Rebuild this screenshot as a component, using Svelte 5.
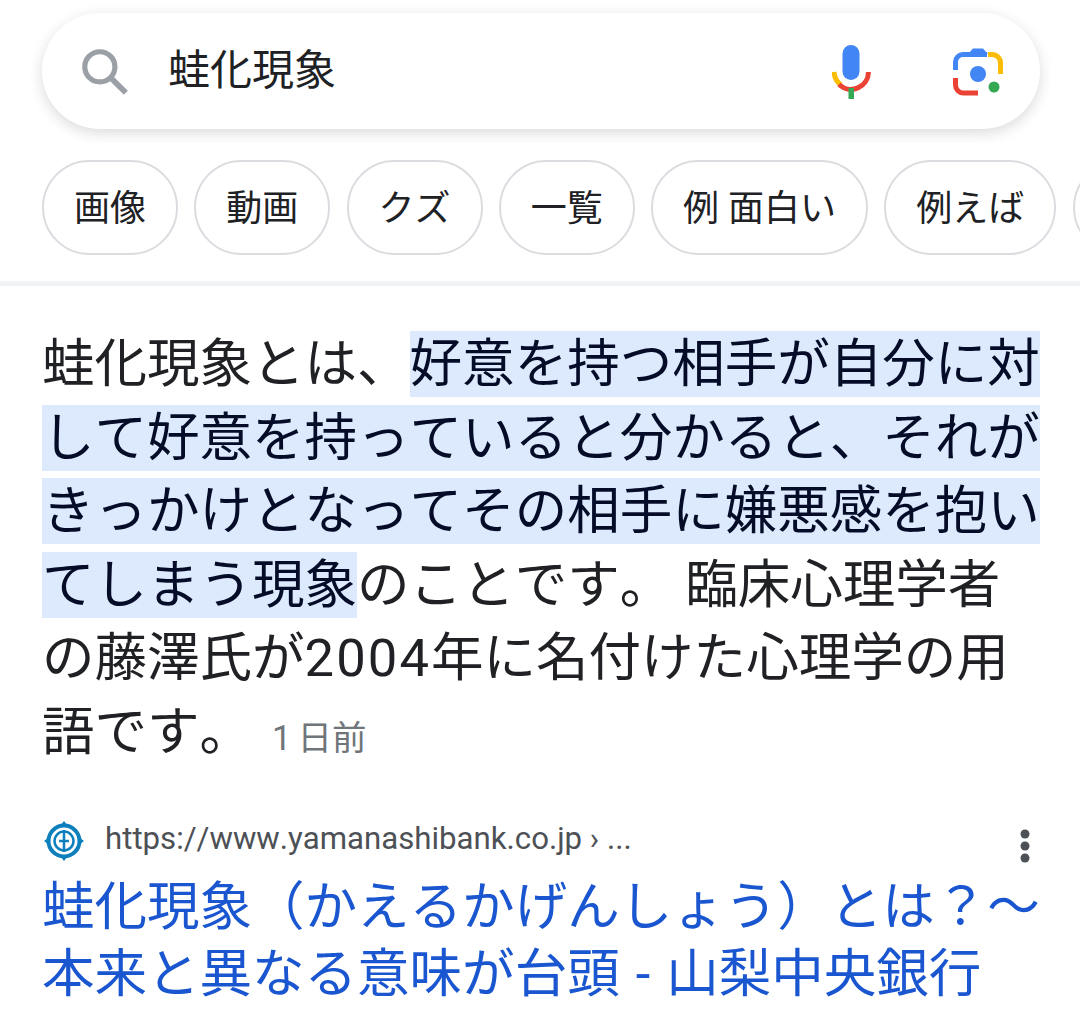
<script>
  const chips = ['画像', '動画', 'クズ', '一覧', '例 面白い', '例えば', '意味'];
</script>

<div class="page">
  <div class="header">
    <div class="search">
      <svg class="glass" width="52" height="52" viewBox="0 0 50 50">
        <circle cx="21" cy="21" r="14.500" fill="none" stroke="#9aa0a6" stroke-width="5" />
        <path d="M31.500 31.500 L46 46" fill="none" stroke="#9aa0a6" stroke-width="5.500" />
      </svg>
      <span class="query">蛙化現象</span>
      <svg class="mic" width="40" height="54" viewBox="0 0 40 54">
        <rect x="10.500" y="0" width="17" height="35" rx="8.500" fill="#4285f4" />
        <path d="M2 27 A 17.500 17.500 0 0 0 9 40" fill="none" stroke="#fbbc04" stroke-width="5" />
        <path d="M36.500 27 A 17.500 17.500 0 0 1 7 39.500" fill="none" stroke="#ea4335" stroke-width="5" />
        <rect x="16.500" y="43" width="5.500" height="11" fill="#34a853" />
      </svg>
      <svg class="lens" width="50" height="50" viewBox="0 0 50 50">
        <path d="M15 7 L20 1.500 H30 L35 7 Z" fill="#4285f4" />
        <path d="M2.500 23 V15 A 7.500 7.500 0 0 1 10 7.500 H34" fill="none" stroke="#4285f4" stroke-width="5" />
        <path d="M35 7.500 H39 A 8.500 8.500 0 0 1 47.500 16 V27" fill="none" stroke="#fbbc04" stroke-width="5" />
        <path d="M2.500 31 V38 A 8 8 0 0 0 10.500 46 H25" fill="none" stroke="#ea4335" stroke-width="5" />
        <circle cx="25" cy="27" r="8" fill="#4285f4" />
        <circle cx="41" cy="40" r="5.500" fill="#34a853" />
      </svg>
    </div>
    <div class="chips">
      {#each chips as chip}
        <span class="chip">{chip}</span>
      {/each}
    </div>
  </div>

  <div class="snippet">
    <p class="answer">蛙化現象とは、<mark>好意を持つ相手が自分に対して好意を持っていると分かると、それがきっかけとなってその相手に嫌悪感を抱いてしまう現象</mark>のことです。 臨床心理学者の藤澤氏が<span class="num">2004</span>年に名付けた心理学の用語です。<span class="date">1 日前</span></p>
  </div>

  <div class="result">
    <div class="source">
      <svg class="favicon" width="40" height="40" viewBox="0 0 40 40">
        <path d="M20 0 L23 4 H17 Z M20 40 L23 36 H17 Z M0 20 L4 23 V17 Z M40 20 L36 23 V17 Z" fill="#0d7fbd" />
        <circle cx="20" cy="20" r="15.500" fill="none" stroke="#0d7fbd" stroke-width="4" />
        <circle cx="20" cy="20" r="9.500" fill="none" stroke="#0d7fbd" stroke-width="2.500" />
        <path d="M20 9 V31 M15 20 H25" stroke="#0d7fbd" stroke-width="2.500" />
      </svg>
      <span class="url">https://www.yamanashibank.co.jp › ...</span>
      <svg class="more" width="10" height="34" viewBox="0 0 10 34">
        <circle cx="5" cy="5" r="4.500" fill="#4d5156" />
        <circle cx="5" cy="17" r="4.500" fill="#4d5156" />
        <circle cx="5" cy="29" r="4.500" fill="#4d5156" />
      </svg>
    </div>
    <h3 class="title">蛙化現象（かえるかげんしょう）とは？～本来と異なる意味が台頭 - 山梨中央銀行</h3>
  </div>
</div>

<style>
  :global(body) {
    background: #fff;
    overflow: hidden;
  }
  .page {
    width: 1080px;
    height: 1021px;
    overflow: hidden;
    font-family: Roboto, "Noto Sans CJK JP", sans-serif;
    font-kerning: none;
    color: #202124;
  }
  .header {
    padding-top: 13px;
    height: 268px;
    border-bottom: 5px solid #f1f3f4;
  }
  .search {
    display: flex;
    align-items: center;
    width: 998px;
    height: 116px;
    margin-left: 42px;
    border-radius: 58px;
    background: #fff;
    box-shadow: 0 4px 14px rgba(32, 33, 36, 0.16);
  }
  .glass {
    margin-left: 36px;
    margin-bottom: 1px;
  }
  .query {
    margin-left: 38px;
    font-size: 42px;
    line-height: 58px;
    flex: 1;
  }
  .mic {
    margin-top: 2px;
    margin-right: 81px;
  }
  .lens {
    margin-right: 37px;
    margin-top: 1px;
  }
  .chips {
    display: flex;
    gap: 16.250px;
    margin-top: 31px;
    padding-left: 42px;
    overflow: hidden;
  }
  .chip {
    flex: none;
    display: flex;
    align-items: center;
    height: 85px;
    padding: 0 30px 6px;
    border: 2.500px solid #dadce0;
    border-radius: 48px;
    font-size: 36px;
    white-space: pre;
  }
  .snippet {
    padding: 42px 40px 0 42px;
  }
  .answer {
    margin: 0;
    font-size: 52.530px;
    line-height: 73.600px;
  }
  mark {
    padding: 2px 0;
    background: #dde9fd;
    color: #040c28;
  }
  .num {
    letter-spacing: 2.100px;
  }
  .date {
    margin-left: 20px;
    font-size: 34.500px;
    word-spacing: -2.500px;
    color: #70757a;
  }
  .result {
    padding: 0 40px 0 42px;
    margin-top: 43px;
  }
  .source {
    display: flex;
    align-items: center;
    height: 40px;
  }
  .favicon {
    margin-left: 2px;
    margin-top: 4px;
  }
  .url {
    margin-left: 21px;
    font-size: 31.200px;
    color: #4d5156;
    flex: 1;
  }
  .more {
    margin-right: 10px;
    margin-top: 14px;
  }
  .title {
    margin: 15px 0 0;
    font-size: 52.530px;
    font-weight: 400;
    line-height: 67px;
    word-spacing: 3px;
    color: #1a56cf;
  }
</style>
